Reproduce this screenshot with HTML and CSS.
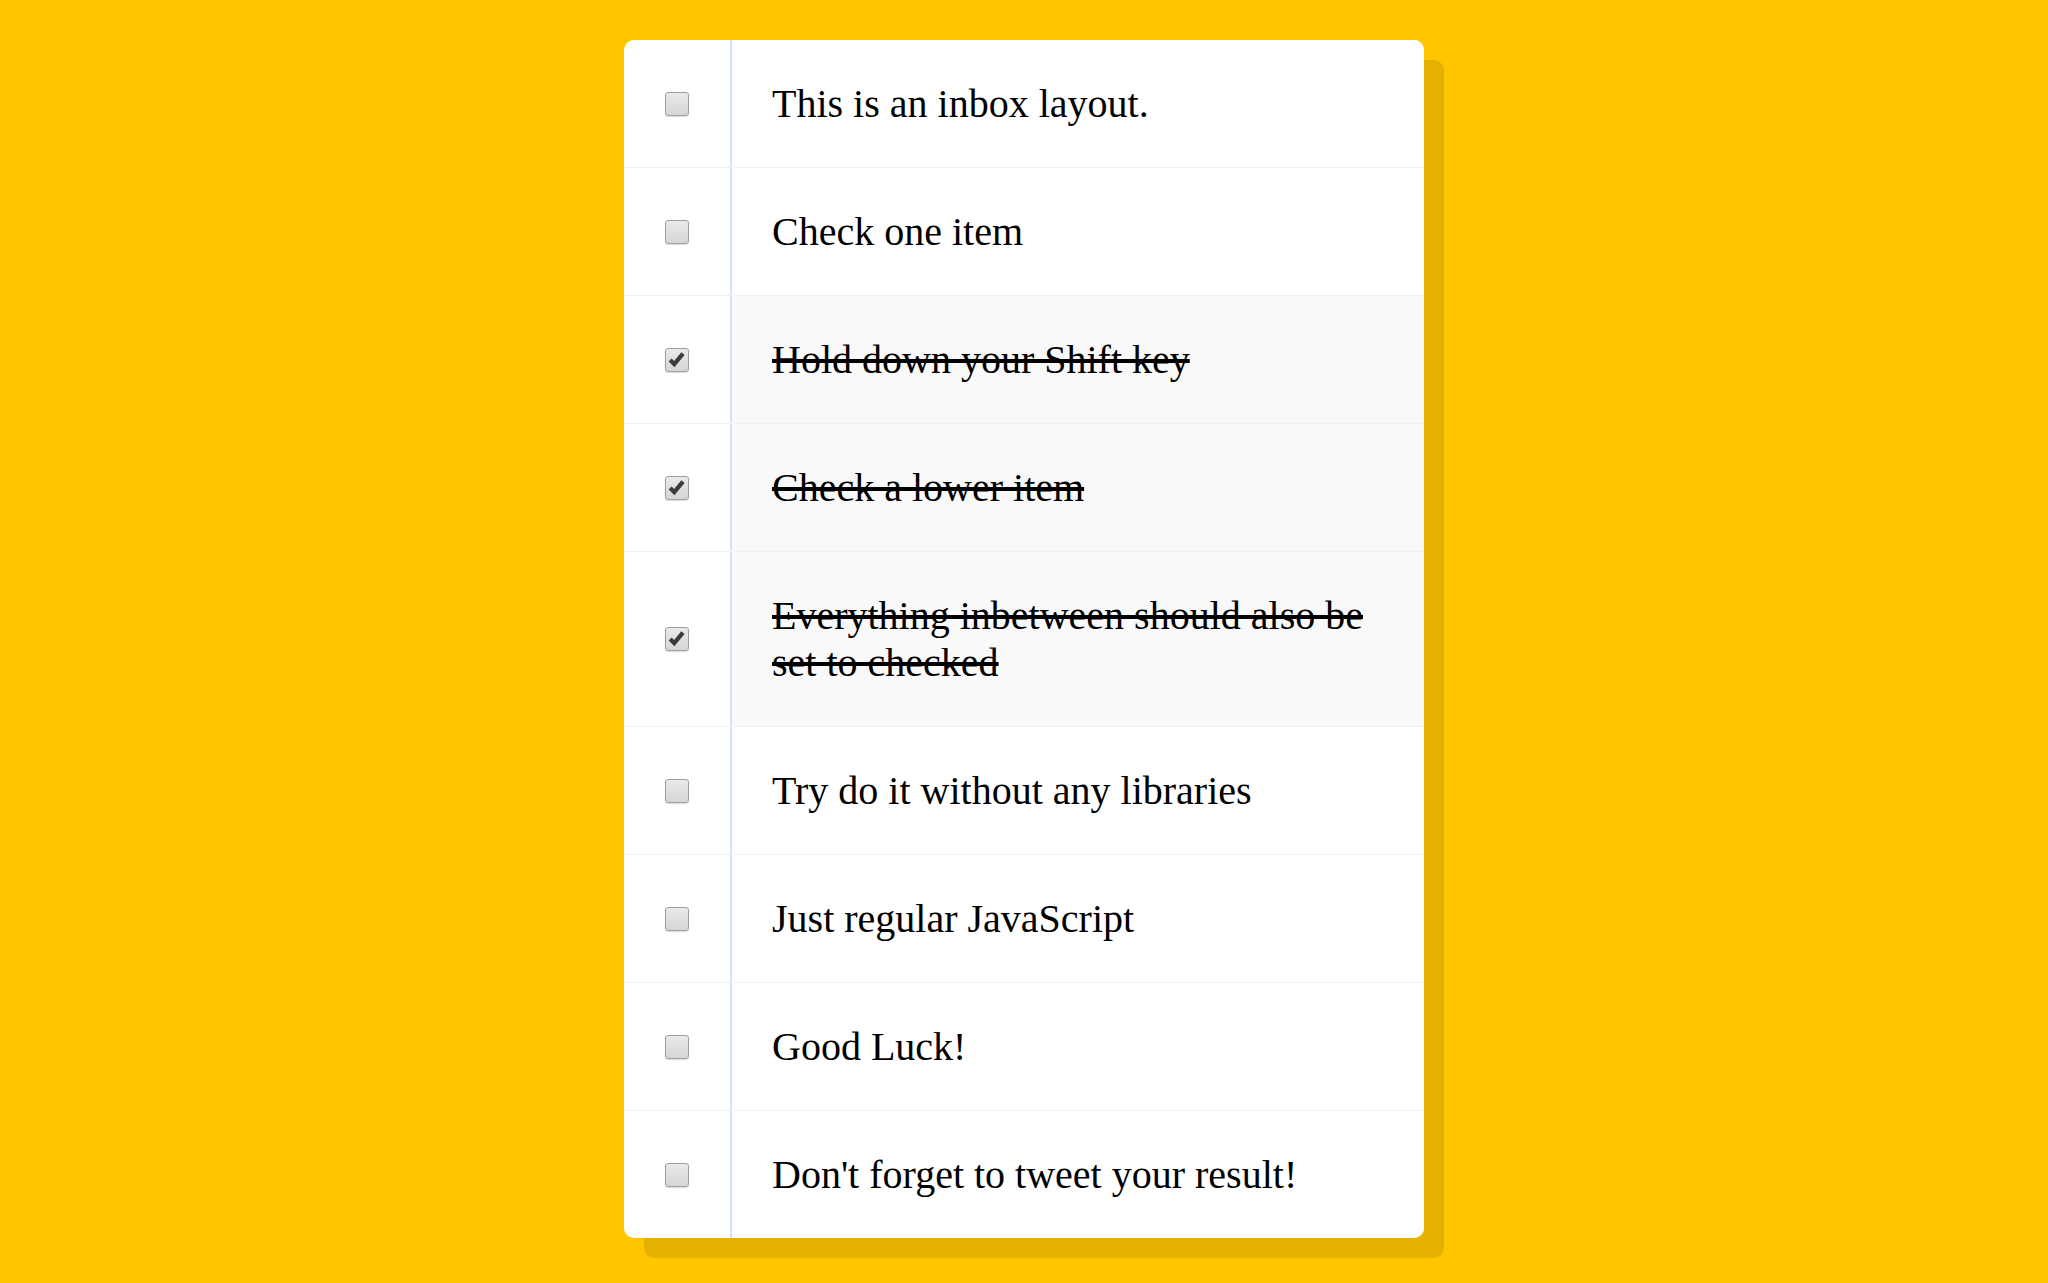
FILE: index.html
```html
<!DOCTYPE html>
<html lang="en">
<head>
<meta charset="UTF-8">
<title>Hold Shift to Check Multiple Checkboxes</title>
<link rel="stylesheet" href="styles.css">
</head>
<body>
<div class="inbox">
  <label class="item">
    <input type="checkbox">
    <span class="box"><svg viewBox="0 0 24 24"><path d="M4.5 12 L9 16.5 L18.5 5"/></svg></span>
    <p>This is an inbox layout.</p>
  </label>
  <label class="item">
    <input type="checkbox">
    <span class="box"><svg viewBox="0 0 24 24"><path d="M4.5 12 L9 16.5 L18.5 5"/></svg></span>
    <p>Check one item</p>
  </label>
  <label class="item">
    <input type="checkbox" checked>
    <span class="box"><svg viewBox="0 0 24 24"><path d="M4.5 12 L9 16.5 L18.5 5"/></svg></span>
    <p>Hold down your Shift key</p>
  </label>
  <label class="item">
    <input type="checkbox" checked>
    <span class="box"><svg viewBox="0 0 24 24"><path d="M4.5 12 L9 16.5 L18.5 5"/></svg></span>
    <p>Check a lower item</p>
  </label>
  <label class="item">
    <input type="checkbox" checked>
    <span class="box"><svg viewBox="0 0 24 24"><path d="M4.5 12 L9 16.5 L18.5 5"/></svg></span>
    <p>Everything inbetween should also be set to checked</p>
  </label>
  <label class="item">
    <input type="checkbox">
    <span class="box"><svg viewBox="0 0 24 24"><path d="M4.5 12 L9 16.5 L18.5 5"/></svg></span>
    <p>Try do it without any libraries</p>
  </label>
  <label class="item">
    <input type="checkbox">
    <span class="box"><svg viewBox="0 0 24 24"><path d="M4.5 12 L9 16.5 L18.5 5"/></svg></span>
    <p>Just regular JavaScript</p>
  </label>
  <label class="item">
    <input type="checkbox">
    <span class="box"><svg viewBox="0 0 24 24"><path d="M4.5 12 L9 16.5 L18.5 5"/></svg></span>
    <p>Good Luck!</p>
  </label>
  <label class="item">
    <input type="checkbox">
    <span class="box"><svg viewBox="0 0 24 24"><path d="M4.5 12 L9 16.5 L18.5 5"/></svg></span>
    <p>Don't forget to tweet your result!</p>
  </label>
</div>
</body>
</html>
```

FILE: styles.css
```css
html {
  background: #ffc600;
  font-family: "Liberation Serif", "Times New Roman", serif;
}

body {
  margin: 0;
  padding: 40px 0;
}

.inbox {
  max-width: 800px;
  margin: 0 auto;
  background: #ffffff;
  border-radius: 10px;
  box-shadow: 20px 20px 0 rgba(0, 0, 0, 0.1);
}

.item {
  display: flex;
  align-items: center;
  border-bottom: 1px solid #f1f1f1;
  cursor: pointer;
}

.item:last-child {
  border-bottom: 0;
}

.item input {
  position: absolute;
  opacity: 0;
  width: 0;
  height: 0;
  margin: 0;
}

.box {
  flex: 0 0 auto;
  box-sizing: border-box;
  width: 24px;
  height: 24px;
  margin: 0 41px;
  border: 1px solid #a0a0a0;
  border-radius: 3px;
  background: linear-gradient(#eaeaea, #d6d6d6);
  box-shadow: 0 1px 1px rgba(0, 0, 0, 0.14);
  display: flex;
  align-items: center;
  justify-content: center;
}

.box svg {
  display: none;
  width: 22px;
  height: 22px;
}

.box path {
  fill: none;
  stroke: #3c3c3c;
  stroke-width: 4.6;
  stroke-linecap: butt;
  stroke-linejoin: miter;
}

input:checked + .box svg {
  display: block;
}

.item p {
  flex: 1;
  margin: 0;
  padding: 40px;
  font-size: 40px;
  font-weight: normal;
  color: #000;
  border-left: 2px solid #d1e2ff;
  background: #ffffff;
}

.item:first-child p {
  border-top-right-radius: 10px;
}

.item:last-child p {
  border-bottom-right-radius: 10px;
}

input:checked ~ p {
  background: #f9f9f9;
  text-decoration: line-through;
  text-decoration-thickness: 4px;
}
```
